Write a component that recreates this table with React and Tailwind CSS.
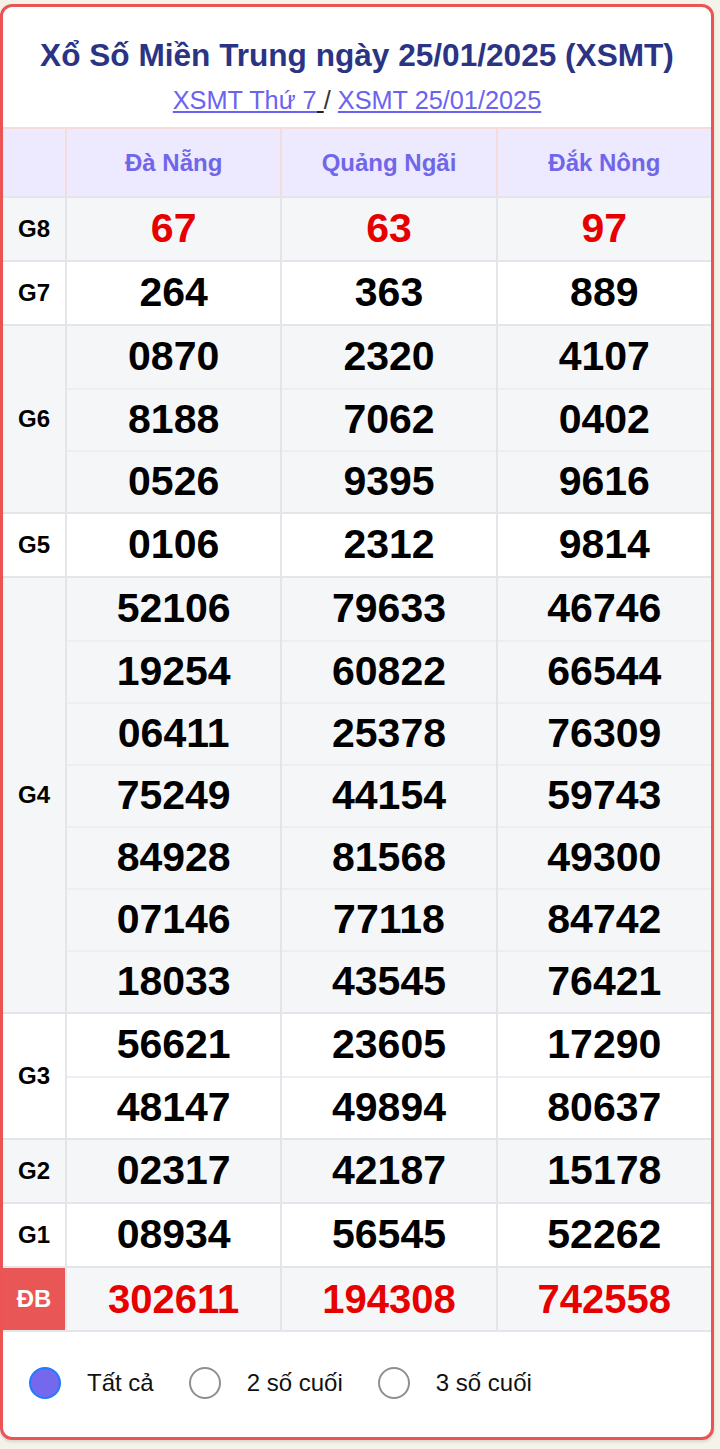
import React from "react";

const rows = [
  { label: "G8", bg: "bg-[#f5f6f8]", red: true, nums: [["67"], ["63"], ["97"]] },
  { label: "G7", bg: "bg-white", nums: [["264"], ["363"], ["889"]] },
  {
    label: "G6",
    bg: "bg-[#f5f6f8]",
    nums: [
      ["0870", "8188", "0526"],
      ["2320", "7062", "9395"],
      ["4107", "0402", "9616"],
    ],
  },
  { label: "G5", bg: "bg-white", nums: [["0106"], ["2312"], ["9814"]] },
  {
    label: "G4",
    bg: "bg-[#f5f6f8]",
    nums: [
      ["52106", "19254", "06411", "75249", "84928", "07146", "18033"],
      ["79633", "60822", "25378", "44154", "81568", "77118", "43545"],
      ["46746", "66544", "76309", "59743", "49300", "84742", "76421"],
    ],
  },
  {
    label: "G3",
    bg: "bg-white",
    nums: [
      ["56621", "48147"],
      ["23605", "49894"],
      ["17290", "80637"],
    ],
  },
  { label: "G2", bg: "bg-[#f5f6f8]", nums: [["02317"], ["42187"], ["15178"]] },
  { label: "G1", bg: "bg-white", nums: [["08934"], ["56545"], ["52262"]] },
  { label: "ĐB", bg: "bg-[#f5f6f8]", red: true, db: true, nums: [["302611"], ["194308"], ["742558"]] },
];

function Row({ row }) {
  return (
    <div className={`flex border-t-2 border-[#e3e5eb] ${row.bg}`}>
      <div
        className={`w-[62px] shrink-0 flex items-center justify-center font-bold text-[24px] ${
          row.db ? "bg-[#e85656] text-white" : "text-black"
        }`}
      >
        {row.label}
      </div>
      {row.nums.map((col, ci) => (
        <div key={ci} className="flex-1 border-l-2 border-[#e3e5eb] flex flex-col">
          {col.map((n, i) => (
            <div
              key={i}
              className={`h-[62px] flex items-center justify-center font-bold ${
                row.db ? "text-[40px]" : "text-[41px]"
              } ${row.red ? "text-[#e60000]" : "text-black"} ${
                i > 0 ? "border-t-2 border-[#eceef2]" : ""
              }`}
            >
              {n}
            </div>
          ))}
        </div>
      ))}
    </div>
  );
}

function Radio({ checked, label }) {
  return (
    <div className="flex items-center">
      {checked ? (
        <span className="w-[32px] h-[32px] rounded-full bg-[#7468ef] border-[2px] border-[#1f7bff] box-border" />
      ) : (
        <span className="w-[32px] h-[32px] rounded-full bg-white border-[2px] border-[#8f8f8f] box-border" />
      )}
      <span className="ml-[26px] text-[24px] text-[#111]">{label}</span>
    </div>
  );
}

export default function App() {
  return (
    <div
      className="w-[720px] min-h-[1449px] bg-[#f5f2e9] pt-[4px]"
      style={{ fontFamily: '"Liberation Sans", Arial, sans-serif' }}
    >
      <div className="w-[714px] border-[3px] border-[#ec5454] rounded-[12px] bg-white overflow-hidden shadow-[0_2px_3px_rgba(0,0,0,0.12)]">
        <div className="pt-[30px] text-center">
          <div className="text-[31.6px] leading-[37px] font-bold text-[#2b3484]">
            Xổ Số Miền Trung ngày 25/01/2025 (XSMT)
          </div>
          <div className="mt-[11px] leading-[30px] text-[25.3px] text-[#6b63ef]">
            <span className="underline decoration-[#6b63ef]">XSMT Thứ 7</span>
            <span className="underline decoration-[#222]"> </span>
            <span className="text-[#333]"> / </span>
            <span className="underline">XSMT 25/01/2025</span>
          </div>
        </div>
        <div className="mt-[12px]">
          <div className="flex border-t-2 border-[#f4dcda] bg-[#ede9fe] h-[69px]">
            <div className="w-[62px] shrink-0" />
            {["Đà Nẵng", "Quảng Ngãi", "Đắk Nông"].map((p) => (
              <div
                key={p}
                className="flex-1 border-l-2 border-[#f4dcda] flex items-center justify-center font-bold text-[24px] text-[#7066ea]"
              >
                {p}
              </div>
            ))}
          </div>
          {rows.map((r) => (
            <Row key={r.label} row={r} />
          ))}
          <div className="border-t-2 border-[#e3e5eb]" />
        </div>
        <div className="h-[105px] flex items-center pl-[26px] pb-[4px] gap-[35px]">
          <Radio checked label="Tất cả" />
          <Radio label="2 số cuối" />
          <Radio label="3 số cuối" />
        </div>
      </div>
    </div>
  );
}
